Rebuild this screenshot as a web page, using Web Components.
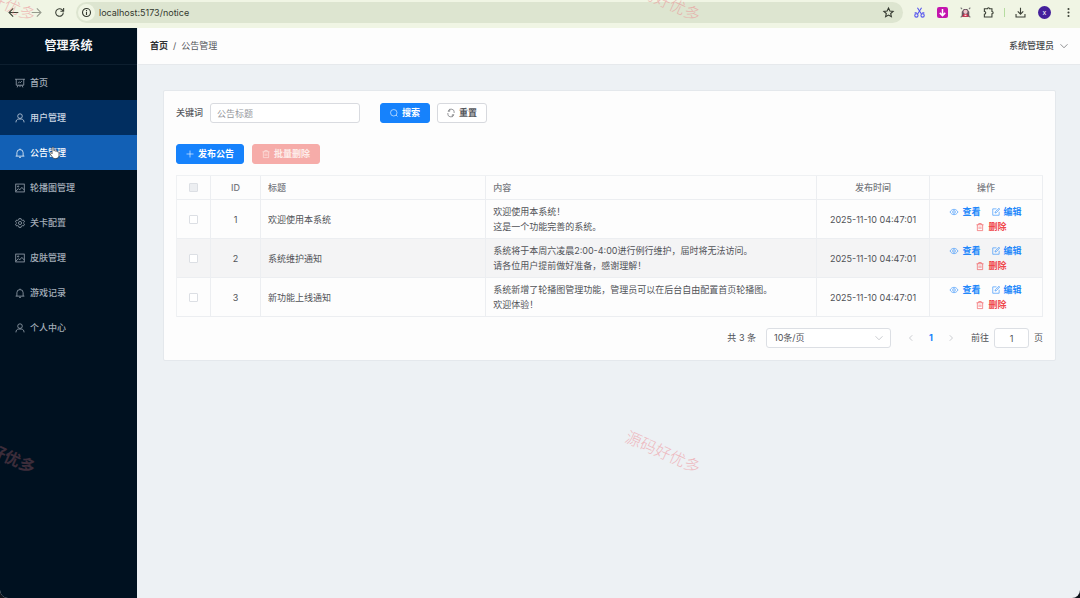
<!DOCTYPE html>
<html lang="zh-CN">
<head>
<meta charset="utf-8">
<title>公告管理 - 管理系统</title>
<style>
  html { background: #10141b; }
  body { margin: 0; font: 9px/14px Inter, "Noto Sans CJK SC", sans-serif; color: #55575c; }
</style>
</head>
<body>
<admin-app></admin-app>
<script>
const ICONS = {
  board: '<path d="M0 2h16M2 2v9.500h12V2M5 11.500l-1.500 3.500M11 11.500l1.500 3.500M8 11.500v3M5 8.500l2-2.500 1.500 1.500L11 5"/>',
  user: '<circle cx="8" cy="5" r="3.700"/><path d="M1.500 15c0-3.500 2-5.300 4.500-5.300h4c2.500 0 4.500 1.800 4.500 5.300"/>',
  bell: '<path d="M1 13h14M3 13V7.500a5 5 0 0 1 10 0V13M8 2.500V1M6.500 15h3"/>',
  picture: '<rect x="1.200" y="1.700" width="13.600" height="12.600"/><circle cx="5" cy="5.500" r="1"/><path d="M1.500 13l4-4 2 2 3.500-4 3.500 4"/>',
  gear: '<path d="M6.300 1h3.400l.5 2 1.300.8 2-.6 1.700 2.900-1.500 1.400v1l1.500 1.400-1.700 2.900-2-.6-1.300.8-.5 2H6.300l-.5-2-1.300-.8-2 .6L.8 9.900l1.500-1.400v-1L.8 6.100l1.700-2.900 2 .6L5.800 3z"/><circle cx="8" cy="8" r="2.500"/>',
  search: '<circle cx="7.500" cy="7.500" r="6.500"/><path d="M12 12l3 3"/>',
  refresh: '<path d="M2 4.500h3.500V1M2.200 4.500A6.300 6.300 0 0 1 14.300 8M14 11.500h-3.500V15M13.800 11.500A6.300 6.300 0 0 1 1.700 8"/>',
  plus: '<path d="M8 1v14M1 8h14"/>',
  trash: '<path d="M1 3.500h14M5.500 3.500V1h5v2.500M2.700 3.500v11.700h10.600V3.500M6.200 7v5M9.800 7v5"/>',
  eye: '<path d="M0 8C2 4.500 4.800 2.700 8 2.700S14 4.500 16 8c-2 3.500-4.800 5.300-8 5.300S2 11.500 0 8z"/><circle cx="8" cy="8" r="2.700"/>',
  edit: '<path d="M9 1.700H1.500v12.800h12.800V7.500M6 10l.5-2.500 7.500-7 1.500 1.500-7 7.500z"/>',
  down: '<path d="M1 4.500l7 7 7-7"/>',
  left: '<path d="M10.500 2.500L5 8l5.500 5.500"/>',
  right: '<path d="M5.500 2.500L11 8l-5.500 5.500"/>',
  back: '<path d="M15 8H2M7.500 2L1.500 8l6 6"/>',
  forward: '<path d="M1 8h13M8.500 2l6 6-6 6"/>',
  reload: '<path d="M13.500 8a5.500 5.500 0 1 1-1.500-3.800L13.500 6M14 1.500V6.200H9.300"/>',
  info: '<circle cx="8" cy="8" r="5.800"/><path d="M8 7v4.500M8 4.300v1.500"/>',
  star: '<path d="M8 1.500l2 4.300 4.700.5-3.500 3.200 1 4.700L8 11.800l-4.200 2.400 1-4.700L1.300 6.300 6 5.800z"/>',
  cut: '<g stroke="#5656ee"><path d="M5 1l6 9.500M11 1L5 10.500"/><circle cx="3.500" cy="12.300" r="2.400"/><circle cx="12.500" cy="12.300" r="2.400"/><path d="M1 8.500h3M12 8.500h3"/></g>',
  grab: '<rect width="16" height="16" rx="3" fill="#c415ae" stroke="none"/><path d="M8 3v9M4 8.500l4 4 4-4" stroke="#fff" stroke-width="2.200"/>',
  sprite: '<path d="M2.500 14V7l3-4h5l3 4v7z" fill="#6a5563" stroke="none"/><path d="M1 1l2 2M15 1l-2 2M1 15l2-2M15 15l-2-2" stroke="#777"/><circle cx="8" cy="7" r="3" fill="#eec3ca" stroke="none"/><path d="M3 14h10l-2.500-4h-5z" fill="#cc2a4a" stroke="none"/><path d="M6.500 12h3" stroke="#fff"/>',
  puzzle: '<path d="M2 2.500h4.500a1.500 1.500 0 0 1 3 0H13v4a1.700 1.700 0 0 1 0 3.500v4.500H2V10.500a2 2 0 0 0 0-4z"/>',
  download: '<path d="M8 1v9M4 6.500l4 4 4-4M1.500 10v4.500h13V10"/>',
  dots: '<g fill="currentColor" stroke="none"><circle cx="8" cy="3" r="1.500"/><circle cx="8" cy="8" r="1.500"/><circle cx="8" cy="13" r="1.500"/></g>',
  hand: '<path d="M5 9.500V2.300c0-1.600 2.200-1.600 2.200 0V6c1-.6 2-.3 2.200.4 1-.4 1.900 0 2.100.7 1.200-.3 2 .3 2 1.400v3c0 2.500-1.500 4-4.200 4-2.600 0-3.600-1-4.600-3L2.500 9.700c-.6-1.500 1-2 1.800-1z" fill="#fff" stroke="#222" stroke-width=".8"/>'
};

function define(name, markup, setup) {
  const template = document.createElement('template');
  template.innerHTML = '<style>*{box-sizing:border-box}button,input,select{font:inherit;color:inherit;margin:0}button{border:0;background:none;padding:0}a{color:inherit;text-decoration:none}</style>' + markup;
  customElements.define(name, class extends HTMLElement {
    connectedCallback() {
      if (this.shadowRoot) return;
      this.attachShadow({ mode: 'open' }).append(template.content.cloneNode(true));
      if (setup) setup(this, this.shadowRoot);
    }
  });
}

define('ui-icon', `
<style>
  :host { display: block; flex: none; width: var(--icon, 8px); height: var(--icon, 8px); }
  svg { display: block; width: 100%; height: 100%; fill: none; stroke: currentColor; stroke-width: var(--stroke, 1.2); overflow: visible; }
</style>
<svg viewBox="0 0 16 16" aria-hidden="true"></svg>`, (host, root) => {
  root.querySelector('svg').innerHTML = ICONS[host.getAttribute('name')];
});

define('browser-bar', `
<style>
  :host { display: flex; align-items: center; height: 28px; padding: 0 6px 3px 8px; background: #f0f5e4; color: #3b4036; --icon: 11px; --stroke: 1.6; }
  .nav, .tools { display: flex; align-items: center; gap: 12px; }
  .fwd { color: #969b8e; }
  .url { flex: 1; display: flex; align-items: center; gap: 4px; height: 21px; margin: 0 11px; padding: 0 9px 0 2px; border-radius: 11px; background: #dde5d0; color: #33382f; }
  .url input { flex: 1; min-width: 0; border: 0; padding: 0; background: none; outline: 0; }
  .site { display: grid; place-items: center; width: 17px; height: 17px; border-radius: 9px; background: #f0f5e4; }
  .line { width: 1px; height: 9px; margin: 0 10px; background: #b6dca0; }
  .face { width: 13px; height: 13px; border-radius: 7px; background: #44209b; color: #fff; font-size: 7px; line-height: 13px; text-align: center; }
</style>
<div class="nav">
  <button aria-label="后退"><ui-icon name="back"></ui-icon></button>
  <button class="fwd" aria-label="前进"><ui-icon name="forward"></ui-icon></button>
  <button aria-label="刷新"><ui-icon name="reload"></ui-icon></button>
</div>
<div class="url">
  <span class="site"><ui-icon name="info"></ui-icon></span>
  <input aria-label="地址" value="localhost:5173/notice">
  <button aria-label="收藏"><ui-icon name="star"></ui-icon></button>
</div>
<div class="tools">
  <ui-icon name="cut"></ui-icon><ui-icon name="grab"></ui-icon><ui-icon name="sprite"></ui-icon><ui-icon name="puzzle"></ui-icon>
</div>
<span class="line"></span>
<div class="tools">
  <ui-icon name="download"></ui-icon><span class="face">x</span><ui-icon name="dots"></ui-icon>
</div>`);

define('side-item', `
<style>
  :host { display: block; color: #a3adb8; --icon: 10px; --stroke: 1.2; }
  :host([hover]) { background: #012e60; color: #cdd8e5; }
  :host([active]) { background: #1260b5; color: #fff; }
  a { display: flex; align-items: center; gap: 5px; height: 35px; padding: 0 15px; }
</style>
<a href="#"><ui-icon></ui-icon><slot></slot></a>`, (host, root) => {
  const icon = document.createElement('ui-icon');
  icon.setAttribute('name', host.getAttribute('icon'));
  root.querySelector('ui-icon').replaceWith(icon);
});

define('side-menu', `
<style>
  :host { display: block; background: #001120; font-weight: 500; }
  h1 { margin: 0; height: 37px; border-bottom: 1px solid #0d1f2f; color: #f5f7f9; font-size: 12px; line-height: 36px; font-weight: 700; text-align: center; }
  .current { position: relative; }
  .pointer { position: absolute; left: 48px; top: 11px; --icon: 13px; }
</style>
<h1>管理系统</h1>
<nav>
  <side-item icon="board">首页</side-item>
  <side-item icon="user" hover>用户管理</side-item>
  <div class="current"><side-item icon="bell" active>公告管理</side-item><ui-icon class="pointer" name="hand"></ui-icon></div>
  <side-item icon="picture">轮播图管理</side-item>
  <side-item icon="gear">关卡配置</side-item>
  <side-item icon="picture">皮肤管理</side-item>
  <side-item icon="bell">游戏记录</side-item>
  <side-item icon="user">个人中心</side-item>
</nav>`);

define('page-header', `
<style>
  :host { display: flex; align-items: center; justify-content: space-between; height: 37px; padding: 0 12px; background: #fdfdfd; border-bottom: 1px solid #e6e9ec; }
  nav { display: flex; gap: 5px; }
  nav a { color: #303133; font-weight: 700; }
  button { display: flex; align-items: center; gap: 6px; color: #444649; font-weight: 500; }
</style>
<nav aria-label="面包屑"><a href="#">首页</a><span>/</span><span>公告管理</span></nav>
<button>系统管理员<ui-icon name="down"></ui-icon></button>`);

define('ui-button', `
<style>
  :host { display: block; flex: none; }
  button { display: flex; align-items: center; gap: 4px; height: 20px; padding: 0 9px; border: 1px solid #d7d9de; border-radius: 3px; background: #fff; color: #55575c; font-weight: 700; }
  :host([kind=primary]) button { background: #1682fc; border-color: #1682fc; color: #fff; }
  :host([kind=danger]) button { background: #f6aca9; border-color: #f6aca9; color: #fdecea; }
</style>
<button><slot name="icon"></slot><slot></slot></button>`, (host, root) => {
  root.querySelector('button').disabled = host.hasAttribute('disabled');
});

define('search-form', `
<style>
  :host { display: block; }
  form { display: flex; align-items: center; gap: 7px; font-weight: 500; }
  input { width: 150px; height: 20px; margin-right: 13px; padding: 0 6px; border: 1px solid #d9dbe0; border-radius: 3px; background: #fff; font-weight: 400; }
  input::placeholder { color: #96989d; opacity: 1; }
</style>
<form>
  <label for="keyword">关键词</label>
  <input id="keyword" placeholder="公告标题">
  <ui-button kind="primary"><ui-icon slot="icon" name="search"></ui-icon>搜索</ui-button>
  <ui-button><ui-icon slot="icon" name="refresh"></ui-icon>重置</ui-button>
</form>`);

define('row-actions', `
<style>
  :host { display: flex; flex-wrap: wrap; justify-content: center; color: #2388fb; font-weight: 700; }
  button { display: flex; align-items: center; gap: 4px; height: 15px; }
  button + button { margin-left: 11px; }
  .del { color: #f0484c; }
</style>
<button><ui-icon name="eye"></ui-icon>查看</button>
<button><ui-icon name="edit"></ui-icon>编辑</button>
<button class="del"><ui-icon name="trash"></ui-icon>删除</button>`);

const NOTICES = [
  [1, '欢迎使用本系统', '欢迎使用本系统！<br>这是一个功能完善的系统。'],
  [2, '系统维护通知', '系统将于本周六凌晨2:00-4:00进行例行维护，届时将无法访问。<br>请各位用户提前做好准备，感谢理解！'],
  [3, '新功能上线通知', '系统新增了轮播图管理功能，管理员可以在后台自由配置首页轮播图。<br>欢迎体验！']
];

define('notice-table', `
<style>
  :host { display: block; line-height: 15px; }
  table { width: 100%; table-layout: fixed; border-collapse: separate; border-spacing: 0; border: 1px solid #eff1f3; border-width: 1px 0 0 1px; }
  th, td { padding: 4px 7px; border: 1px solid #eceef1; border-width: 0 1px 1px 0; text-align: left; color: #505257; }
  th { height: 24px; color: #76787d; font-weight: 500; }
  .mid { text-align: center; }
  .check { width: 34px; }
  .id { width: 50px; }
  .title { width: 26%; }
  .time, .ops { width: 113px; }
  tbody tr:nth-child(2) { background: #f4f4f5; }
  input { appearance: none; display: block; width: 9px; height: 9px; margin: 0 auto; border: 1px solid #dcdfe4; border-radius: 1px; background: #fff; }
  input:disabled { background: #eceef1; }
</style>
<table>
  <thead><tr>
    <th class="mid check"><input type="checkbox" aria-label="全选" disabled></th>
    <th class="mid id">ID</th><th class="title">标题</th><th>内容</th>
    <th class="mid time">发布时间</th><th class="mid ops">操作</th>
  </tr></thead>
  <tbody></tbody>
</table>`, (host, root) => {
  root.querySelector('tbody').innerHTML = NOTICES.map(([id, title, body]) => `
    <tr><td class="mid"><input type="checkbox" aria-label="选择 ${id}"></td><td class="mid">${id}</td><td>${title}</td>
    <td>${body}</td><td class="mid">2025-11-10 04:47:01</td><td class="mid"><row-actions></row-actions></td></tr>`).join('');
});

define('page-nav', `
<style>
  :host { display: flex; align-items: center; justify-content: flex-end; gap: 10px; color: #505257; }
  .size { display: grid; align-items: center; width: 125px; }
  .size > * { grid-area: 1 / 1; }
  .size ui-icon { justify-self: end; margin-right: 8px; color: #a8abb2; pointer-events: none; }
  select, input { appearance: none; height: 20px; border: 1px solid #dcdfe4; border-radius: 3px; background: #fff; }
  select { width: 100%; padding: 0 7px; }
  .pages { display: flex; }
  .pages button { display: grid; place-items: center; width: 20px; height: 20px; color: #a8abb2; }
  .pages .on { color: #1682fc; font-weight: 700; }
  .jump { display: flex; align-items: center; gap: 5px; }
  .jump input { width: 35px; text-align: center; padding: 0; }
</style>
<span>共 3 条</span>
<div class="size"><select aria-label="每页条数"><option>10条/页</option></select><ui-icon name="down"></ui-icon></div>
<div class="pages">
  <button aria-label="上一页"><ui-icon name="left"></ui-icon></button>
  <button class="on">1</button>
  <button aria-label="下一页"><ui-icon name="right"></ui-icon></button>
</div>
<div class="jump"><label for="page">前往</label><input id="page" value="1"><span>页</span></div>`);

define('notice-card', `
<style>
  :host { display: block; padding: 12px; border: 1px solid #e4e8ec; border-radius: 2px; background: #fdfdfd; }
  .bar { display: flex; gap: 8px; margin: 21px 0 11px; }
  page-nav { margin-top: 11px; }
</style>
<search-form></search-form>
<div class="bar">
  <ui-button kind="primary"><ui-icon slot="icon" name="plus"></ui-icon>发布公告</ui-button>
  <ui-button kind="danger" disabled><ui-icon slot="icon" name="trash"></ui-icon>批量删除</ui-button>
</div>
<notice-table></notice-table>
<page-nav></page-nav>`);

define('water-mark', `
<style>
  :host { position: absolute; width: 80px; margin: -12px 0 0 -40px; color: #ee8088; opacity: .5; font-size: 16px; line-height: 24px; font-weight: 300; white-space: nowrap; text-align: center; rotate: 24deg; pointer-events: none; }
  :host([dim]) { opacity: .25; font-weight: 700; }
</style>
<slot></slot>`);

define('admin-app', `
<style>
  :host { position: relative; display: flex; flex-direction: column; min-height: 100vh; overflow: hidden; border-radius: 0 0 8px 8px; background: #edf1f4; }
  .body { flex: 1; display: grid; grid-template-columns: 137px 1fr; gap: 1px; }
  main { padding: 25px 24px 25px 25px; }
</style>
<browser-bar></browser-bar>
<div class="body">
  <side-menu></side-menu>
  <div><page-header></page-header><main><notice-card></notice-card></main></div>
</div>
<water-mark style="left:-2px;top:0">源码好优多</water-mark>
<water-mark style="left:663px;top:0">源码好优多</water-mark>
<water-mark dim style="left:-2px;top:452px">源码好优多</water-mark>
<water-mark style="left:663px;top:452px">源码好优多</water-mark>`);
</script>
</body>
</html>
